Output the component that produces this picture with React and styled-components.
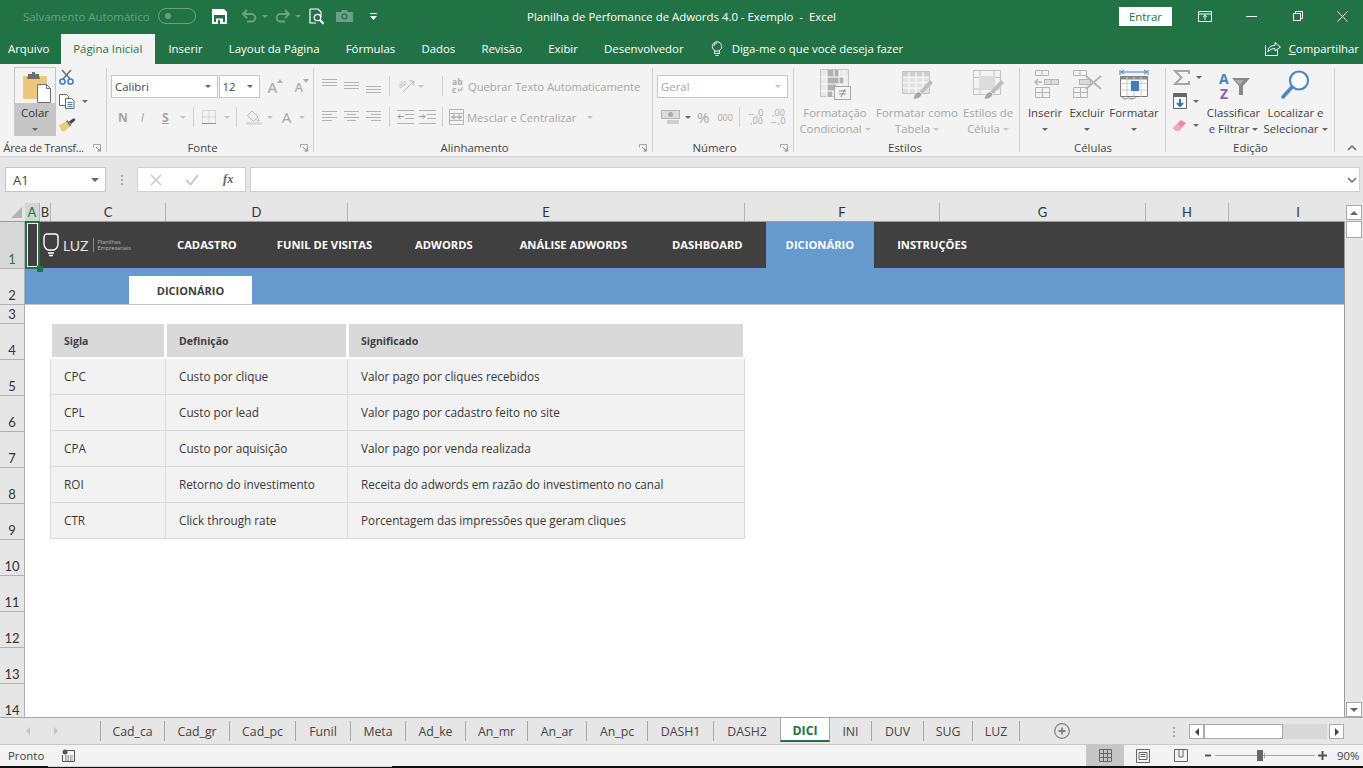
import React from 'react';
import styled, { createGlobalStyle } from 'styled-components';

const GREEN = '#217346';
const DIM = '#a6a6a6';
const UI = '"Open Sans", "Noto Sans", sans-serif';
const FS = '11.4px';

const Global = createGlobalStyle`
  html, body { margin: 0; padding: 0; background: #f3f3f3; }
  * { box-sizing: border-box; }
`;

const Page = styled.div`
  width: 1363px; height: 768px; overflow: hidden; display: flex; flex-direction: column;
  font-family: ${UI}; font-size: ${FS}; color: #444; position: relative;
`;

/* ---------- title bar ---------- */
const TitleBar = styled.header`
  height: 34px; background: ${GREEN}; display: grid; grid-template-columns: 1fr auto 1fr; align-items: center; color: #fff; padding-bottom: 2px;
`;
const Qat = styled.div`display: flex; align-items: center; padding-left: 23px;`;
const QatLabel = styled.span`color: #6aa184; width: 135px; white-space: nowrap;`;
const Toggle = styled.span`
  width: 38px; height: 16px; border: 1px solid #6aa184; border-radius: 8px; display: flex; align-items: center; padding-left: 6px;
  &::before { content: ''; width: 6px; height: 6px; border-radius: 50%; background: #6aa184; }
`;
const QatSlot = styled.span`display: inline-flex; margin-left: ${p => p.$ml}px;`;
const Title = styled.div`white-space: pre; color: #fff;`;
const WinArea = styled.div`display: flex; justify-content: flex-end; align-items: center;`;
const SignIn = styled.button`
  width: 53px; height: 19px; background: #fff; color: ${GREEN}; border: 0; font: ${FS} ${UI}; padding: 0; margin-right: 10px;
`;
const WinBtn = styled.span`width: ${p => p.$w || 46}px; display: flex; justify-content: center;`;

/* ---------- ribbon tabs ---------- */
const TabRow = styled.nav`height: 30px; background: ${GREEN}; display: flex; align-items: stretch; color: #fff;`;
const RTab = styled.span`
  padding: ${p => p.$first ? '0 12px 2px 8px' : '0 13.1px 2px'}; display: flex; align-items: center; white-space: nowrap;
  ${p => p.$active && `background: #f3f3f3; color: ${GREEN}; padding: 0 13px 2px 12px;`}
`;
const TellMe = styled.span`display: flex; align-items: center; gap: 8px; margin-left: 13px; white-space: nowrap; padding-bottom: 2px;`;
const Share = styled.span`display: flex; align-items: center; gap: 7px; margin-left: auto; padding: 0 4px 2px 0; white-space: nowrap;`;
const ShareText = styled.span`&::first-letter { text-decoration: underline; }`;

/* ---------- ribbon ---------- */
const Ribbon = styled.section`
  height: 93px; background: #f3f3f3; border-bottom: 1px solid #d2d2d2; display: flex; position: relative;
`;
const Group = styled.div`
  width: ${p => p.$w}px; position: relative; display: flex; flex-direction: column;
  &::after { content: ''; position: absolute; right: 0; top: 4px; bottom: 4px; width: 1px; background: #d0d0d0; }
`;
const GroupBody = styled.div`height: 75px; display: flex; ${p => p.$col && 'flex-direction: column;'} padding-left: ${p => p.$pl || 0}px;`;
const GroupLabel = styled.div`
  height: 17px; line-height: 17px; text-align: center; color: #444; white-space: nowrap; padding-right: ${p => p.$pr || 0}px;
  letter-spacing: ${p => p.$ls || 0}px;
`;
const Launcher = styled.span`position: absolute; right: ${p => p.$r || 6}px; bottom: 4px; display: flex;`;
const PasteBtn = styled.div`
  width: 42px; height: 69px; margin-top: 3px; display: flex; flex-direction: column;
`;
const PasteTop = styled.div`height: 36px; border: 1px solid #c6c6c6; border-bottom: 0; padding: 3px 0 0 7px;`;
const PasteBottom = styled.div`flex: 1; background: #c6c6c6; display: flex; flex-direction: column; align-items: center; padding-top: 2px; gap: 7px; color: #333; line-height: 16px;`;
const Caret = styled.i`
  display: inline-block; width: 0; height: 0; border-left: 3px solid transparent; border-right: 3px solid transparent;
  border-top: 3px solid ${p => p.$c || '#666'}; margin-left: ${p => p.$ml || 0}px;
`;
const NameCaret = styled(Caret)`border-width: 4px 4px 0;`;
const ClipTools = styled.div`display: flex; flex-direction: column; padding: 5px 0 0 3px; gap: 8px;`;
const ClipTool = styled.span`display: flex; align-items: center; gap: 6px; height: 16px;`;
const Select = styled.div`
  width: ${p => p.$w}px; height: 23px; background: #fff; border: 1px solid #c6c6c6; display: flex; align-items: center; justify-content: space-between;
  padding: 0 6px 0 3px; color: ${p => p.$dim ? DIM : '#444'}; margin-left: ${p => p.$ml || 0}px;
`;
const Row = styled.div`display: flex; align-items: center; height: ${p => p.$h || 20}px; margin-top: ${p => p.$mt || 0}px;`;
const Gap = styled.span`
  display: inline-flex; align-items: center; margin-left: ${p => p.$ml || 0}px; color: ${DIM}; white-space: nowrap; font-size: ${p => p.$fs ? `${p.$fs}px` : FS};
`;
const StyleGlyph = styled(Gap)`
  font-weight: ${p => p.$b ? 700 : 400}; font-style: ${p => p.$i ? 'italic' : 'normal'}; text-decoration: ${p => p.$u ? 'underline' : 'none'};
`;
const GrowA = styled(Gap)`font-weight: 600; color: #b0b0b0; padding-right: 5px;`;
const VSep = styled.i`display: inline-block; width: 1px; height: ${p => p.$h || 20}px; background: #d0d0d0; margin-left: ${p => p.$ml || 0}px;`;
const BigBtn = styled.div`
  width: ${p => p.$w}px; display: flex; flex-direction: column; align-items: center; text-align: center;
  color: ${p => p.$dim ? DIM : '#444'}; line-height: 16px;
`;
const BigIcon = styled.div`height: 41px; display: flex; align-items: center; justify-content: center; flex-shrink: 0;`;
const BtnLine = styled.span`display: flex; align-items: center; height: 16px; white-space: nowrap;`;
const EditCol = styled.div`width: 38px; padding: 5px 0 0 7px; display: flex; flex-direction: column; gap: 8px;`;
const Collapse = styled.span`position: absolute; right: 6px; bottom: 5px; display: flex;`;
const WrapGlyph = styled.span`font: 700 8.5px/8px ${UI}; color: #aaa; width: 13px; display: block;`;
const WrapLine = styled.span`display: flex; align-items: center; gap: 1px;`;
const DecGlyph = styled.span`font: 9px/8px ${UI}; color: #aaa; display: block; text-align: right; width: 16px; white-space: pre;`;

/* ---------- formula bar ---------- */
const FormulaBar = styled.div`height: 46px; background: #e6e6e6; display: flex; align-items: flex-start; padding: 10px 3px 0 5px;`;
const NameBox = styled.div`
  width: 101px; height: 25px; background: #fff; border: 1px solid #c6c6c6; display: flex; align-items: center; justify-content: space-between;
  padding: 0 6px 0 7px; font-size: 13px; color: #444;
`;
const Dots = styled.span`width: 31px; display: flex; flex-direction: column; align-items: center; justify-content: center; gap: 2px; height: 25px;
  & i { width: 2px; height: 2px; background: #aaa; display: block; }
`;
const FxBox = styled.div`
  width: 109px; height: 25px; background: #fff; border: 1px solid #d0d0d0; display: flex; align-items: center; padding-left: 12px; gap: 23px;
`;
const Fx = styled.span`font: italic 700 12.5px "Liberation Serif", serif; color: #666; margin-left: 1px;`;
const FormulaInput = styled.div`
  flex: 1; height: 25px; background: #fff; border: 1px solid #d0d0d0; margin-left: 4px; display: flex; justify-content: flex-end; align-items: center; padding-right: 2px;
`;

/* ---------- sheet ---------- */
const GridArea = styled.div`height: 514px; display: flex; background: #e6e6e6; overflow: hidden; flex-shrink: 0;`;
const SheetCol = styled.div`width: 1345px; display: flex; flex-direction: column;`;
const ColHeads = styled.div`height: 18px; display: flex; background: #e6e6e6; flex-shrink: 0; font: 13px Lato, sans-serif; color: #333; overflow: hidden;`;
const Corner = styled.div`width: 25px; flex-shrink: 0; display: flex; align-items: flex-end; justify-content: flex-end; padding: 0 3px 3px 0;`;
const ColHead = styled.div`
  width: ${p => p.$w}px; flex-shrink: 0; display: flex; align-items: center; justify-content: center; border-right: 1px solid #b4b4b4; line-height: 18px;
  ${p => p.$sel && `background: #d4d4d4; color: ${GREEN};`}
  ${p => p.$last && 'border-right: 0;'}
`;
const SheetBody = styled.div`
  flex: 1; display: flex; position: relative; border-top: 1px solid #9c9c9c; border-right: 1px solid #9c9c9c;
`;
const RowHeads = styled.div`width: 25px; flex-shrink: 0; background: #e6e6e6; border-right: 1px solid #b0b0b0; font: 13px Lato, sans-serif; color: #333;`;
const RowHead = styled.div`
  height: ${p => p.$h}px; display: flex; align-items: flex-end; justify-content: center; border-bottom: 1px solid #b0b0b0; line-height: 16px; padding-bottom: 1px;
  ${p => p.$sel && `background: #d8d8d8; color: ${GREEN};`}
`;
const Cells = styled.div`flex: 1; background: #fff; display: flex; flex-direction: column;`;
const NavBar = styled.div`height: 46px; background: #404040; display: flex; align-items: stretch; color: #fff; flex-shrink: 0;`;
const Logo = styled.div`width: 129px; display: flex; align-items: center; padding-left: 18px; flex-shrink: 0;`;
const LogoWord = styled.span`font: 400 14px Lato, sans-serif; color: #e4e4e4; margin-left: 4px;`;
const LogoRule = styled.i`width: 1px; height: 14px; background: #8a8a8a; margin: 0 4px 0 4px;`;
const LogoSub = styled.span`font: 5.5px/6.5px ${UI}; color: #b8b8b8;`;
const NavItem = styled.div`
  padding: 0 20px 2px; margin-left: ${p => p.$ml}px; display: flex; align-items: center; font: 700 11.2px ${UI}; white-space: nowrap;
  ${p => p.$active && 'background: #6699cc;'}
`;
const SubBar = styled.div`height: 37px; background: #6699cc; border-bottom: 1px solid #c4c4c4; padding: 8px 0 0 104px; flex-shrink: 0;`;
const SubTab = styled.div`width: 123px; height: 28px; background: #fff; display: flex; align-items: center; justify-content: center; font: 700 11px ${UI}; color: #404040;`;
const Table = styled.div`
  margin: 18px 0 0 25px; width: 695px; display: grid; grid-template-columns: 116px 182px 397px; font: 11.75px ${UI}; color: #383838;
`;
const TH = styled.div`
  height: 33px; margin: 1px 2px 2px ${p => p.$first ? 2 : 1}px; background: #d9d9d9; display: flex; align-items: center; padding-left: 12px; font-weight: 700; font-size: 10.5px; color: #404040;
`;
const TD = styled.div`
  height: 36px; background: #f2f2f2; display: flex; align-items: center; padding: 0 0 2px 13px;
  border-bottom: 1px solid #d9d9d9; border-right: 1px solid #d9d9d9;
  ${p => p.$first && 'border-left: 1px solid #d9d9d9;'}
`;
const Cursor = styled.div`
  position: absolute; left: 25px; top: -1px; width: 15px; height: 48px; border: 2px solid ${GREEN}; box-shadow: inset 0 0 0 1px #fff;
  &::after { content: ''; position: absolute; right: -5px; bottom: -5px; width: 6px; height: 6px; background: ${GREEN}; }
`;
const VScroll = styled.div`width: 18px; display: flex; flex-direction: column; align-items: center; padding-top: 2px;`;
const ScrollBtn = styled.div`
  width: ${p => p.$w || 16}px; height: ${p => p.$h || 15}px; background: #fff; border: 1px solid #a9a9a9; display: flex; align-items: center; justify-content: center; flex-shrink: 0;
`;
const VThumb = styled.div`width: 16px; height: 17px; background: #fff; border: 1px solid #a9a9a9; margin-top: 1px;`;
const VTrack = styled.div`flex: 1;`;
const Tri = styled.i`
  width: 0; height: 0; display: block;
  ${p => p.$d === 'up' && 'border-left: 4px solid transparent; border-right: 4px solid transparent; border-bottom: 4px solid #666;'}
  ${p => p.$d === 'down' && 'border-left: 4px solid transparent; border-right: 4px solid transparent; border-top: 4px solid #666;'}
  ${p => p.$d === 'left' && `border-top: 4px solid transparent; border-bottom: 4px solid transparent; border-right: 4px solid ${p.$c || '#444'};`}
  ${p => p.$d === 'right' && `border-top: 4px solid transparent; border-bottom: 4px solid transparent; border-left: 4px solid ${p.$c || '#444'};`}
`;

/* ---------- sheet tabs ---------- */
const TabsBar = styled.div`height: 28px; background: #e6e6e6; border-top: 1px solid #a6a6a6; border-bottom: 1px solid #c8c8c8; display: flex; position: relative; flex-shrink: 0;`;
const TabNav = styled.div`width: 100px; flex-shrink: 0; display: flex; align-items: center; padding-left: 26px; gap: 24px;`;
const STabs = styled.div`display: flex; height: 24px; border-left: 1px solid transparent; margin-top: 3px;`;
const STab = styled.div`
  width: ${p => p.$w}px; flex-shrink: 0; display: flex; align-items: center; justify-content: center; font-size: 12.3px; color: #444;
  border-right: 1px solid #a6a6a6; height: 20px; white-space: nowrap;
  ${p => p.$start && 'border-left: 1px solid #a6a6a6; margin-left: -1px;'}
  ${p => p.$active && `
    background: #fff; color: ${GREEN}; font-weight: 700; height: 24px; margin-top: -3px; border-left: 1px solid #a6a6a6; margin-left: -1px;
    border-bottom: 2px solid ${GREEN}; padding-top: 2px;
  `}
`;
const AddSheet = styled.span`width: 84px; display: flex; justify-content: center; align-items: center; height: 20px; flex-shrink: 0;`;
const HScrollWrap = styled.div`display: flex; align-items: center; position: absolute; left: 1189px; top: 6px;`;
const HScrollDots = styled(Dots)`position: absolute; left: -31px; top: -3px; width: 31px; height: 22px;`;
const HThumb = styled.div`width: 79px; height: 15px; background: #fff; border: 1px solid #a9a9a9;`;
const HTrack = styled.div`width: 44px; height: 15px; background: #d8d8d8; margin-right: 2px;`;

/* ---------- status ---------- */
const Status = styled.footer`height: 21px; background: #f3f3f3; display: flex; align-items: center; color: #444; flex-shrink: 0;`;
const StatusLeft = styled.span`padding-left: 8px; width: 62px;`;
const StatusRight = styled.div`margin-left: auto; display: flex; align-items: center; height: 100%;`;
const ViewBtn = styled.span`width: ${p => p.$w}px; height: 100%; display: flex; align-items: center; justify-content: center; ${p => p.$active && 'background: #c6c6c6;'}`;
const Zoom = styled.div`display: flex; align-items: center; gap: 3px; margin-left: 5px;`;
const Slider = styled.div`width: 100px; height: 1px; background: #a6a6a6; position: relative;
  &::before { content: ''; position: absolute; left: 42px; top: -5px; width: 6px; height: 11px; background: #666; }
  &::after { content: ''; position: absolute; left: 49px; top: -2px; width: 1px; height: 5px; background: #a6a6a6; }
`;
const Pct = styled.span`margin: 0 5px 0 10px; width: 21px; white-space: nowrap;`;
const BottomEdge = styled.div`height: 2px; background: #111; flex-shrink: 0; position: relative;
  &::before { content: ''; position: absolute; left: 48px; width: 344px; top: 0; height: 1px; background: #d0d0d0; }
`;
const IconSvg = styled.svg`display: block; flex-shrink: 0; overflow: visible;`;

/* ---------- icons ---------- */
const S = ({ w, h, children }) => <IconSvg width={w} height={h} viewBox={`0 0 ${w} ${h}`} fill="none">{children}</IconSvg>;
const Lines = ({ w = 15, h = 14, rows, c = '#b4b4b4' }) => (
  <S w={w} h={h}>{rows.map(([a, b, y], i) => <path key={i} d={`M${a} ${y + .5}H${b}`} stroke={c} />)}</S>
);
const DIMG = '#6aa184';
const SaveI = () => <S w={15} h={15}><path d="M0 0h12l3 3v12H0z" fill="#fff" /><path d="M2 6h11v7H2z" fill={GREEN} /><path d="M4 9.5h7V15H4z" fill="#fff" /><path d="M6 11h2v4H6z" fill={GREEN} /><path d="M3 1.5h9v2.6H3z" fill="#fff" /></S>;
const UndoI = ({ flip }) => <S w={16} h={14}><g transform={flip ? 'translate(16 0) scale(-1 1)' : undefined} stroke={DIMG} strokeWidth="2"><path d="M2 5h8.5a3.8 3.8 0 0 1 0 7.6H6" /><path d="M6 1 2 5l4 4" /></g></S>;
const PreviewI = () => <S w={15} h={17}><path d="M1 1h8l3 3v5M1 1v14h6" stroke="#fff" strokeWidth="1.2" /><circle cx="8.5" cy="9.5" r="3.2" stroke="#fff" strokeWidth="1.3" /><path d="m11 12 3.5 3.8" stroke="#fff" strokeWidth="2" /></S>;
const CameraI = () => <S w={17} h={12}><path d="M0 2h5l1-2h5l1 2h5v10H0z" fill={DIMG} /><circle cx="8.5" cy="6.5" r="3" fill={GREEN} /><circle cx="8.5" cy="6.5" r="1.8" fill={DIMG} /></S>;
const MoreI = () => <S w={7} h={7}><path d="M0 .5h7" stroke="#fff" /><path d="m0 3 3.5 4L7 3z" fill="#fff" /></S>;
const RibbonDisplayI = () => <S w={14} h={11}><path d="M.5.5h13v10H.5zM.5 3h13" stroke="#fff" /><path d="M7 9V4M5 6l2-2 2 2" stroke="#fff" /></S>;
const MinI = () => <S w={11} h={1}><path d="M0 .5h11" stroke="#fff" /></S>;
const RestoreI = () => <S w={10} h={10}><path d="M.5 2.5h7v7h-7zM2.5 2.5v-2h7v7h-2" stroke="#fff" /></S>;
const CloseI = () => <S w={11} h={11}><path d="m.5.5 10 10M10.5.5l-10 10" stroke="#fff" /></S>;
const BulbI = () => <S w={14} h={15}><circle cx="7" cy="5.5" r="4.7" stroke="#fff" /><path d="M4.5 10v2.5h5V10M5.5 14.5h3" stroke="#fff" /><path d="M4 5a3 3 0 0 1 3-3" stroke="#fff" /></S>;
const ShareI = () => <S w={17} h={15}><path d="M.5 4.5v10h12V9" stroke="#fff" /><path d="M3 11c0-5 3-6.5 7-6.5V1.5l5.5 4.5L10 10V7.5c-3 0-5 1-7 3.5z" stroke="#fff" /></S>;
const PasteI = () => <S w={30} h={32}><rect x="1" y="5" width="24" height="23" rx="1" fill="#eec77f" /><path d="M6 5V3h4V1h3v2h4v2l1 3H5z" fill="#6e6e6e" /><path d="M15.5 13.5h9l4 4v14h-13z" fill="#fff" stroke="#707070" /><path d="M24.5 13.5v4h4" stroke="#707070" /></S>;
const CutI = () => <S w={15} h={16}><path d="m3 1 8 9M12 1 4 10" stroke="#707070" strokeWidth="1.6" /><circle cx="3.5" cy="12.5" r="2.6" stroke="#3d7fc1" strokeWidth="1.5" /><circle cx="11.5" cy="12.5" r="2.6" stroke="#3d7fc1" strokeWidth="1.5" /></S>;
const CopyI = () => <S w={16} h={15}><path d="M.5.5h7l2 2v9H.5z" fill="#fff" stroke="#666" /><path d="M6.5 4.5h6l2.5 2.5v7.5H6.5z" fill="#fff" stroke="#666" /><path d="M8.5 8.5h5M8.5 10.5h5M8.5 12.5h5" stroke="#3d7fc1" /></S>;
const BrushI = () => <S w={17} h={14}><path d="M0 7.5 7 3.5l4 5-5.5 5H3z" fill="#eec77f" /><path d="m7 3.5 4 5 1.5-1.5-4-5z" fill="#777" /><path d="m10 3.5 5-3.5 1.5 2L12 6z" fill="#444" /></S>;
const LaunchI = () => <S w={8} h={8}><path d="M.5.5h7v7M.5.5v3M.5.5h3" stroke="#a6a6a6" /><path d="m3 3 4 4M7 4.5V7H4.5" stroke="#888" /></S>;
const BigAI = ({ up }) => (
  <GrowA $fs={up ? 15 : 13}>A<S w={6} h={4}><path d={up ? 'M0 4 3 0l3 4z' : 'M0 0l3 4 3-4z'} fill="#b0b0b0" transform="translate(0 -6)" /></S></GrowA>
);
const BordersI = () => <S w={14} h={14}><path d="M.5.5h13v13H.5zM7 .5v13M.5 7h13" stroke="#bbb" strokeDasharray="1 1" /><path d="M0 13.5h14" stroke="#999" /></S>;
const BucketI = () => <S w={16} h={16}><path d="m6 2 6 6-4.5 4.5-6-6z" stroke="#b4b4b4" /><path d="m12 9 1.5 3-2.5.5z" fill="#b4b4b4" /><rect y="13" width="16" height="3" fill="#ddd" /></S>;
const OrientI = () => <S w={17} h={16}><text x="2" y="9" fontSize="7.5" fill="#b4b4b4" fontFamily="Open Sans" transform="rotate(-35 5 8)">ab</text><path d="m6 14 10-10M12 3h4.5v4.5" stroke="#b4b4b4" /></S>;
const IndentI = ({ out }) => <S w={17} h={14}><path d="M0 .5h17M8 4.5h9M8 8.5h9M0 13.5h17" stroke="#b4b4b4" /><g transform={out ? undefined : 'translate(7 0) scale(-1 1)'}><path d="M1 6.5h6M3.5 4 1 6.5 3.5 9" stroke="#999" /></g></S>;
const MergeI = () => <S w={15} h={16}><path d="M.5.5h14v15H.5zM.5 4.5h14M.5 11.5h14M5 4.5v7M10 4.5v7" stroke="#b4b4b4" /><path d="M3 8h9M4 6.500 2.500 8 4 9.500M11 6.500 12.500 8 11 9.500" stroke="#999" /></S>;
const ReturnI = () => <S w={6} h={6}><path d="M5 0v3H1M2.500 1.500 1 3l1.500 1.500" stroke="#aaa" /></S>;
const CurrencyI = () => <S w={19} h={15}><rect x=".5" y=".5" width="18" height="8" fill="#dcdcdc" stroke="#b4b4b4" /><circle cx="9.500" cy="4.500" r="2.500" fill="#aaa" /><path d="M6 11h12M6 13h12" stroke="#c4c4c4" strokeWidth="1.500" /></S>;
const CondI = () => <S w={31} h={31}><path d="M.5.5h28v27H.5z" fill="#fff" stroke="#c4c4c4" /><path d="M1 1h27v26H1z" fill="#e8e8e8" /><path d="M7 1h12v7H7zM7 8h17v7H7zM7 15h9v7H7zM7 22h5v6H7z" fill="#b0b0b0" /><path d="M7 1v27M14 1v7M19 1v27M24 1v14M1 8h27M1 15h27M1 22h18" stroke="#fff" /><rect x="14.500" y="17.500" width="16" height="13" fill="#f3f3f3" stroke="#a6a6a6" /><path d="M19 22h7M19 25h7M25 20l-4 8" stroke="#8c8c8c" /></S>;
const TableStyleI = () => <S w={31} h={31}><path d="M.5 2.500h27v22H.5z" fill="#f3f3f3" stroke="#c4c4c4" /><path d="M1 3h26v5H1z" fill="#cfcfcf" /><path d="M1 8h26v16H1z" fill="#e2e2e2" /><path d="M7 3v21M14 3v21M21 3v21M1 8h26M1 13.500h26M1 19h26" stroke="#fff" /><path d="m17 23 11-12 3 3-11 11z" fill="#bdbdbd" /><path d="M11 30c1-5 4-8 7-7l2 2c0 3-5 6-9 5z" fill="#a6a6a6" stroke="#f3f3f3" /></S>;
const CellStyleI = () => <S w={31} h={31}><path d="M.5 1.500h27v24H.5zM.5 8.500h27M.5 20h27M7 1.500v24M21 1.500v24" stroke="#c4c4c4" /><rect x="6" y="7" width="16" height="14" fill="#dcdcdc" /><path d="m17 23 11-12 3 3-11 11z" fill="#bdbdbd" /><path d="M11 30c1-5 4-8 7-7l2 2c0 3-5 6-9 5z" fill="#a6a6a6" stroke="#f3f3f3" /></S>;
const InsertI = () => <S w={27} h={29}><path d="M3.500.5h13v5h-13zM10 .5v5M3.500 17.500h14v10h-14zM3.500 22.500h14M10.500 17.500v10" stroke="#b4b4b4" /><rect x="12.500" y="9.500" width="14" height="5" fill="#dcdcdc" stroke="#b4b4b4" /><path d="M19 9.500v5" stroke="#b4b4b4" /><path d="M3 12h7M6 9l-3 3 3 3" stroke="#b4b4b4" strokeWidth="1.400" /></S>;
const DeleteI = () => <S w={31} h={29}><path d="M1.500.5h13v5h-13zM8 .5v5M1.500 17.500h14v10h-14zM1.500 22.500h14M8.500 17.500v10" stroke="#b4b4b4" /><rect x="7.500" y="9.500" width="11" height="5" fill="#dcdcdc" stroke="#b4b4b4" /><path d="m14 6 15 13M29 6 14 19" stroke="#b4b4b4" strokeWidth="1.800" /></S>;
const FormatI = () => <S w={30} h={32}><path d="M1 1v5M29 1v5" stroke="#3d7fc1" /><path d="M2 3h26M5 1 2 3l3 2M25 1l3 2-3 2" stroke="#3d7fc1" /><path d="M1.500 7.500h27v20h-27z" fill="#fff" stroke="#777" /><path d="M1.500 7.500h27v3h-27z" fill="#8c8c8c" /><path d="M8 7.500v20M15 7.500v20M22 7.500v20M1.500 14.500h27M1.500 21h27" stroke="#ccc" /><rect x="12" y="12" width="8" height="10" fill="#3d7fc1" /><path d="M3 27.500c0 3 5 3 6 1 1 2 7 2 8-1" stroke="#777" /></S>;
const SigmaI = () => <S w={17} h={15}><path d="M16 4V1H2l6.500 6.500L2 14h14v-3" stroke="#a6a6a6" strokeWidth="2" /></S>;
const FillI = () => <S w={14} h={16}><path d="M.5.5h13v15H.5z" fill="#fff" stroke="#666" /><path d="M1 1h12v3H1z" fill="#666" /><path d="M7 6v7M4 10l3 3 3-3" stroke="#2e75b6" strokeWidth="2" /></S>;
const EraserI = () => <S w={14} h={13}><path d="m0 9 8-8 5 3-7 8H3z" fill="#eb8b9d" /><path d="M0 9l3 3h3l3-3.500L5 5z" fill="#f1aab7" /></S>;
const SortI = () => <S w={32} h={30}><text x="1" y="14" fontSize="14" fontWeight="700" fontFamily="Open Sans" fill="#4a80c0">A</text><text x="2" y="29" fontSize="14" fontWeight="700" fontFamily="Open Sans" fill="#8d5cb5">Z</text><path d="M14 8h18l-7 8v9h-4v-9z" fill="#888" /><path d="M17 10h9l-4 5z" fill="#aaa" /></S>;
const FindI = () => <S w={29} h={29}><circle cx="18" cy="10.500" r="9" fill="#fff" stroke="#4a86c5" strokeWidth="2.200" /><path d="M11 17 2 27" stroke="#4a86c5" strokeWidth="3.600" strokeLinecap="round" /></S>;
const ChevI = ({ c = '#666', down }) => <S w={10} h={6}><path d={down ? 'm1 1 4 4 4-4' : 'm1 5 4-4 4 4'} stroke={c} strokeWidth="1.500" /></S>;
const XI = () => <S w={12} h={12}><path d="m1 1 10 10M11 1 1 11" stroke="#c8c8c8" strokeWidth="1.600" /></S>;
const CheckI = () => <S w={14} h={12}><path d="m1 6 4.500 4.500L13 1" stroke="#c8c8c8" strokeWidth="2" /></S>;
const CornerI = () => <S w={11} h={11}><path d="M11 0v11H0z" fill="#b4b4b4" /></S>;
const LuzBulb = () => <S w={16} h={25}><path d="M4 1h8a3 3 0 0 1 3 3v7a7 7 0 0 1-4 6H5a7 7 0 0 1-4-6V4a3 3 0 0 1 3-3z" stroke="#fff" strokeWidth="1.400" /><path d="M5 20h6M6 22.500h4" stroke="#fff" strokeWidth="1.400" /></S>;
const PlusI = () => <S w={16} h={16}><circle cx="8" cy="8" r="7.300" stroke="#808080" strokeWidth="1.200" /><path d="M4.500 8h7M8 4.500v7" stroke="#808080" strokeWidth="1.800" /></S>;
const MacroI = () => <S w={13} h={13}><circle cx="3" cy="3" r="2.500" fill="#555" /><path d="M5 1.500h7.500v11H.5V6" stroke="#555" /><path d="M3 7h8M3 9h8M3 11h8" stroke="#555" strokeDasharray="1.500 1" /></S>;
const NormalI = () => <S w={13} h={13}><path d="M.5.5h12v12H.5zM4.500.5v12M8.500.5v12M.5 4.500h12M.5 8.500h12" stroke="#666" /></S>;
const PageI = () => <S w={14} h={14}><path d="M.5.500h13v13H.5z" stroke="#666" /><path d="M3 3.500h8v7H3zM4.500 5.500h5M4.500 7.500h5" stroke="#666" /></S>;
const BreakI = () => <S w={14} h={13}><path d="M.5.500h13v12H.5zM5 .5v7.500h4V.5" stroke="#666" /></S>;

const colHeads = [
  ['A', 15, true], ['B', 11], ['C', 115], ['D', 182], ['E', 397], ['F', 195], ['G', 206], ['H', 83], ['I', 138, false, true],
];
const rows = [[47, 1, true], [36, 2], [19, 3], [36, 4], [36, 5], [36, 6], [36, 7], [36, 8], [36, 9], [36, 10], [36, 11], [36, 12], [36, 13], [36, 14]];
const nav = [['CADASTRO', 3], ['FUNIL DE VISITAS', 0], ['ADWORDS', 3], ['ANÁLISE ADWORDS', 7], ['DASHBOARD', 5], ['DICIONÁRIO', 3], ['INSTRUÇÕES', 3]];
const dict = [
  ['CPC', 'Custo por clique', 'Valor pago por cliques recebidos'],
  ['CPL', 'Custo por lead', 'Valor pago por cadastro feito no site'],
  ['CPA', 'Custo por aquisição', 'Valor pago por venda realizada'],
  ['ROI', 'Retorno do investimento', 'Receita do adwords em razão do investimento no canal'],
  ['CTR', 'Click through rate', 'Porcentagem das impressões que geram cliques'],
];
const sheets = [['Cad_ca', 65], ['Cad_gr', 65], ['Cad_pc', 66], ['Funil', 55], ['Meta', 55], ['Ad_ke', 60], ['An_mr', 62], ['An_ar', 59], ['An_pc', 61], ['DASH1', 66], ['DASH2', 67], ['DICI', 50], ['INI', 42], ['DUV', 52], ['SUG', 49], ['LUZ', 47]];

export default function App() {
  return (
    <Page>
      <Global />
      <TitleBar>
        <Qat>
          <QatLabel>Salvamento Automático</QatLabel>
          <Toggle />
          <QatSlot $ml={16}><SaveI /></QatSlot>
          <QatSlot $ml={14}><UndoI /></QatSlot>
          <QatSlot $ml={5}><Caret $c={DIMG} /></QatSlot>
          <QatSlot $ml={7}><UndoI flip /></QatSlot>
          <QatSlot $ml={4}><Caret $c={DIMG} /></QatSlot>
          <QatSlot $ml={8}><PreviewI /></QatSlot>
          <QatSlot $ml={12}><CameraI /></QatSlot>
          <QatSlot $ml={17}><MoreI /></QatSlot>
        </Qat>
        <Title>Planilha de Perfomance de Adwords 4.0 - Exemplo  -  Excel</Title>
        <WinArea>
          <SignIn>Entrar</SignIn>
          <WinBtn><RibbonDisplayI /></WinBtn>
          <WinBtn><MinI /></WinBtn>
          <WinBtn $w={47}><RestoreI /></WinBtn>
          <WinBtn $w={42}><CloseI /></WinBtn>
        </WinArea>
      </TitleBar>

      <TabRow>
        <RTab $first>Arquivo</RTab>
        <RTab $active>Página Inicial</RTab>
        <RTab>Inserir</RTab>
        <RTab>Layout da Página</RTab>
        <RTab>Fórmulas</RTab>
        <RTab>Dados</RTab>
        <RTab>Revisão</RTab>
        <RTab>Exibir</RTab>
        <RTab>Desenvolvedor</RTab>
        <TellMe><BulbI />Diga-me o que você deseja fazer</TellMe>
        <Share><ShareI /><ShareText>Compartilhar</ShareText></Share>
      </TabRow>

      <Ribbon>
        <Group $w={107}>
          <GroupBody $pl={14}>
            <PasteBtn>
              <PasteTop><PasteI /></PasteTop>
              <PasteBottom>Colar<Caret /></PasteBottom>
            </PasteBtn>
            <ClipTools>
              <ClipTool><CutI /></ClipTool>
              <ClipTool><CopyI /><Caret $ml={1} /></ClipTool>
              <ClipTool><BrushI /></ClipTool>
            </ClipTools>
          </GroupBody>
          <GroupLabel $pr={20} $ls={-0.35}>Área de Transf...</GroupLabel>
          <Launcher><LaunchI /></Launcher>
        </Group>

        <Group $w={207}>
          <GroupBody $col $pl={4}>
            <Row $h={23} $mt={11}>
              <Select $w={110}>Calibri<Caret /></Select>
              <Select $w={43} $ml={1}>12<Caret /></Select>
              <Gap $ml={7}><BigAI up /></Gap>
              <Gap $ml={6}><BigAI /></Gap>
            </Row>
            <Row $h={20} $mt={9}>
              <StyleGlyph $ml={7} $fs={12} $b>N</StyleGlyph>
              <StyleGlyph $ml={13} $fs={12} $i>I</StyleGlyph>
              <StyleGlyph $ml={18} $fs={12} $b $u>S</StyleGlyph>
              <Gap $ml={11}><Caret $c="#c4c4c4" /></Gap>
              <VSep $ml={7} />
              <Gap $ml={8}><BordersI /></Gap>
              <Gap $ml={8}><Caret $c="#c4c4c4" /></Gap>
              <VSep $ml={6} />
              <Gap $ml={9}><BucketI /></Gap>
              <Gap $ml={5}><Caret $c="#c4c4c4" /></Gap>
              <StyleGlyph $ml={9} $fs={15}>A</StyleGlyph>
              <Gap $ml={8}><Caret $c="#c4c4c4" /></Gap>
            </Row>
          </GroupBody>
          <GroupLabel $pr={16}>Fonte</GroupLabel>
          <Launcher><LaunchI /></Launcher>
        </Group>

        <Group $w={339}>
          <GroupBody $col $pl={8}>
            <Row $h={20} $mt={12}>
              <Lines rows={[[0, 15, 0], [0, 15, 3], [0, 15, 6]]} />
              <Gap $ml={7}><Lines rows={[[0, 15, 3], [0, 15, 6], [0, 15, 9]]} /></Gap>
              <Gap $ml={7}><Lines rows={[[0, 15, 7], [0, 15, 10], [0, 15, 13]]} /></Gap>
              <VSep $ml={8} />
              <Gap $ml={7}><OrientI /></Gap>
              <Gap $ml={4}><Caret $c="#c4c4c4" /></Gap>
              <VSep $ml={18} />
              <Gap $ml={9}><WrapGlyph>ab<WrapLine>c<ReturnI /></WrapLine></WrapGlyph></Gap>
              <Gap $ml={3} $fs={11.2}>Quebrar Texto Automaticamente</Gap>
            </Row>
            <Row $h={20} $mt={11}>
              <Lines rows={[[0, 15, 1], [0, 10, 4], [0, 15, 7], [0, 10, 10]]} />
              <Gap $ml={7}><Lines rows={[[0, 15, 1], [3, 12, 4], [0, 15, 7], [3, 12, 10]]} /></Gap>
              <Gap $ml={7}><Lines rows={[[0, 15, 1], [5, 15, 4], [0, 15, 7], [5, 15, 10]]} /></Gap>
              <VSep $ml={8} />
              <Gap $ml={7}><IndentI out /></Gap>
              <Gap $ml={5}><IndentI /></Gap>
              <VSep $ml={6} />
              <Gap $ml={6}><MergeI /></Gap>
              <Gap $ml={3} $fs={11.2}>Mesclar e Centralizar</Gap>
              <Gap $ml={11}><Caret $c="#c4c4c4" /></Gap>
            </Row>
          </GroupBody>
          <GroupLabel $pr={18}>Alinhamento</GroupLabel>
          <Launcher><LaunchI /></Launcher>
        </Group>

        <Group $w={141}>
          <GroupBody $col $pl={4}>
            <Row $h={23} $mt={11}>
              <Select $w={131} $dim>Geral<Caret $c="#c4c4c4" /></Select>
            </Row>
            <Row $h={20} $mt={9}>
              <Gap $ml={4}><CurrencyI /></Gap>
              <Gap $ml={5}><Caret /></Gap>
              <Gap $ml={6} $fs={15}>%</Gap>
              <Gap $ml={8} $fs={9}>000</Gap>
              <VSep $ml={6} />
              <Gap $ml={7}><DecGlyph>{'←,0\n,00'}</DecGlyph></Gap>
              <Gap $ml={6}><DecGlyph>{',00\n→,0'}</DecGlyph></Gap>
            </Row>
          </GroupBody>
          <GroupLabel $pr={18}>Número</GroupLabel>
          <Launcher><LaunchI /></Launcher>
        </Group>

        <Group $w={226}>
          <GroupBody>
            <BigBtn $w={82} $dim><BigIcon><CondI /></BigIcon><BtnLine>Formatação</BtnLine><BtnLine>Condicional<Caret $ml={3} $c="#c4c4c4" /></BtnLine></BigBtn>
            <BigBtn $w={82} $dim><BigIcon><TableStyleI /></BigIcon><BtnLine>Formatar como</BtnLine><BtnLine>Tabela<Caret $ml={3} $c="#c4c4c4" /></BtnLine></BigBtn>
            <BigBtn $w={60} $dim><BigIcon><CellStyleI /></BigIcon><BtnLine>Estilos de</BtnLine><BtnLine>Célula<Caret $ml={3} $c="#c4c4c4" /></BtnLine></BigBtn>
          </GroupBody>
          <GroupLabel $pr={4}>Estilos</GroupLabel>
        </Group>

        <Group $w={146}>
          <GroupBody $pl={4}>
            <BigBtn $w={42}><BigIcon><InsertI /></BigIcon><BtnLine>Inserir</BtnLine><BtnLine><Caret /></BtnLine></BigBtn>
            <BigBtn $w={42}><BigIcon><DeleteI /></BigIcon><BtnLine>Excluir</BtnLine><BtnLine><Caret /></BtnLine></BigBtn>
            <BigBtn $w={52}><BigIcon><FormatI /></BigIcon><BtnLine>Formatar</BtnLine><BtnLine><Caret /></BtnLine></BigBtn>
          </GroupBody>
          <GroupLabel>Células</GroupLabel>
        </Group>

        <Group $w={169}>
          <GroupBody>
            <EditCol>
              <ClipTool><SigmaI /><Caret /></ClipTool>
              <ClipTool><FillI /><Caret /></ClipTool>
              <ClipTool><EraserI /><Caret /></ClipTool>
            </EditCol>
            <BigBtn $w={59}><BigIcon><SortI /></BigIcon><BtnLine>Classificar</BtnLine><BtnLine>e Filtrar<Caret $ml={3} /></BtnLine></BigBtn>
            <BigBtn $w={65}><BigIcon><FindI /></BigIcon><BtnLine>Localizar e</BtnLine><BtnLine>Selecionar<Caret $ml={3} /></BtnLine></BigBtn>
          </GroupBody>
          <GroupLabel>Edição</GroupLabel>
        </Group>
        <Collapse><ChevI /></Collapse>
      </Ribbon>

      <FormulaBar>
        <NameBox>A1<NameCaret /></NameBox>
        <Dots><i /><i /><i /></Dots>
        <FxBox><XI /><CheckI /><Fx>fx</Fx></FxBox>
        <FormulaInput><ChevI down /></FormulaInput>
      </FormulaBar>

      <GridArea>
        <SheetCol>
          <ColHeads>
            <Corner><CornerI /></Corner>
            {colHeads.map(([l, w, sel, last]) => <ColHead key={l} $w={w} $sel={sel} $last={last}>{l}</ColHead>)}
          </ColHeads>
          <SheetBody>
            <RowHeads>
              {rows.map(([h, n, sel]) => <RowHead key={n} $h={h} $sel={sel}>{n}</RowHead>)}
            </RowHeads>
            <Cells>
              <NavBar>
                <Logo>
                  <LuzBulb />
                  <LogoWord>LUZ</LogoWord>
                  <LogoRule />
                  <LogoSub>Planilhas<br />Empresariais</LogoSub>
                </Logo>
                {nav.map(([n, ml]) => <NavItem key={n} $ml={ml} $active={n === 'DICIONÁRIO'}>{n}</NavItem>)}
              </NavBar>
              <SubBar><SubTab>DICIONÁRIO</SubTab></SubBar>
              <Table>
                <TH $first>Sigla</TH><TH>Definição</TH><TH>Significado</TH>
                {dict.map(r => r.map((c, i) => <TD key={c} $first={i === 0}>{c}</TD>))}
              </Table>
            </Cells>
            <Cursor />
          </SheetBody>
        </SheetCol>
        <VScroll>
          <ScrollBtn $h={15}><Tri $d="up" /></ScrollBtn>
          <VThumb />
          <VTrack />
          <ScrollBtn $h={15}><Tri $d="down" /></ScrollBtn>
        </VScroll>
      </GridArea>

      <TabsBar>
        <TabNav><Tri $d="left" $c="#c4c4c4" /><Tri $d="right" $c="#c4c4c4" /></TabNav>
        <STabs>
          {sheets.map(([s, w], i) => <STab key={s} $w={w} $start={i === 0} $active={s === 'DICI'}>{s}</STab>)}
          <AddSheet><PlusI /></AddSheet>
        </STabs>
        <HScrollWrap>
          <HScrollDots><i /><i /><i /></HScrollDots>
          <ScrollBtn $w={15}><Tri $d="left" /></ScrollBtn>
          <HThumb />
          <HTrack />
          <ScrollBtn $w={15}><Tri $d="right" /></ScrollBtn>
        </HScrollWrap>
      </TabsBar>

      <Status>
        <StatusLeft>Pronto</StatusLeft>
        <MacroI />
        <StatusRight>
          <ViewBtn $w={38} $active><NormalI /></ViewBtn>
          <ViewBtn $w={38}><PageI /></ViewBtn>
          <ViewBtn $w={38}><BreakI /></ViewBtn>
          <Zoom>
            <S w={7} h={3}><path d="M0 1.500h6" stroke="#555" strokeWidth="2" /></S>
            <Slider />
            <S w={9} h={9}><path d="M0 4.500h9M4.500 0v9" stroke="#555" strokeWidth="2" /></S>
          </Zoom>
          <Pct>90%</Pct>
        </StatusRight>
      </Status>
      <BottomEdge />
    </Page>
  );
}
